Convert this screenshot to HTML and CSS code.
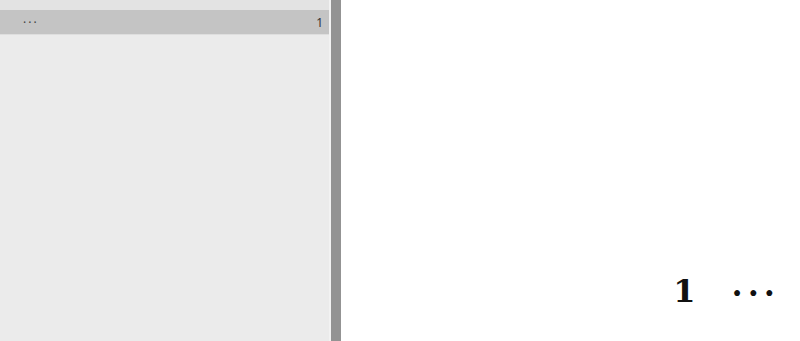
FILE: index.html
```html
<!DOCTYPE html>
<html lang="en">
<head>
    <meta charset="UTF-8">
    <title>Preview</title>
    <link rel="stylesheet" href="styles.css">
</head>
<body>
    <div class="layout">
        <!-- Outline panel -->
        <aside class="sidebar">
            <div class="sidebar-top"></div>
            <div class="row active">
                <span class="row-label">···</span>
                <span class="row-page">1</span>
            </div>
        </aside>
        <div class="splitter"></div>

        <!-- Page preview -->
        <main class="preview">
            <div class="formula">
                <span class="num">1</span>
                <span class="dots">···</span>
            </div>
        </main>
    </div>
</body>
</html>
```

FILE: styles.css
```css
* {
    margin: 0;
    padding: 0;
    box-sizing: border-box;
}

body {
    background: #fff;
    font-family: "Noto Sans", "Open Sans", sans-serif;
    overflow: hidden;
}

.layout {
    display: flex;
    height: 341px;
}

/* Sidebar */
.sidebar {
    width: 331px;
    background: #ebebeb;
    border-right: 2px solid #f2f2f2;
    display: flex;
    flex-direction: column;
}

.sidebar-top {
    height: 10px;
    background: #e3e3e3;
}

.row {
    height: 25px;
    display: flex;
    align-items: center;
    justify-content: space-between;
    padding: 0 6px 0 23px;
    font-size: 12px;
    color: #333;
    border-bottom: 1px solid #dedede;
}

.row.active {
    background: #c4c4c4;
}

.row-label {
    font-size: 12px;
    letter-spacing: 2px;
    color: #444;
}

.splitter {
    width: 10px;
    background: #939393;
}

/* Preview */
.preview {
    flex: 1;
    display: flex;
    align-items: flex-end;
    justify-content: flex-end;
    padding: 0 20px 34px 0;
}

.formula {
    display: flex;
    align-items: baseline;
    gap: 36px;
    color: #111;
    font-family: "DejaVu Serif", serif;
    font-size: 32px;
    line-height: 1;
}

.num {
    font-weight: bold;
}

.dots {
    letter-spacing: 5px;
    font-weight: bold;
    transform: translateY(2px);
}
```
